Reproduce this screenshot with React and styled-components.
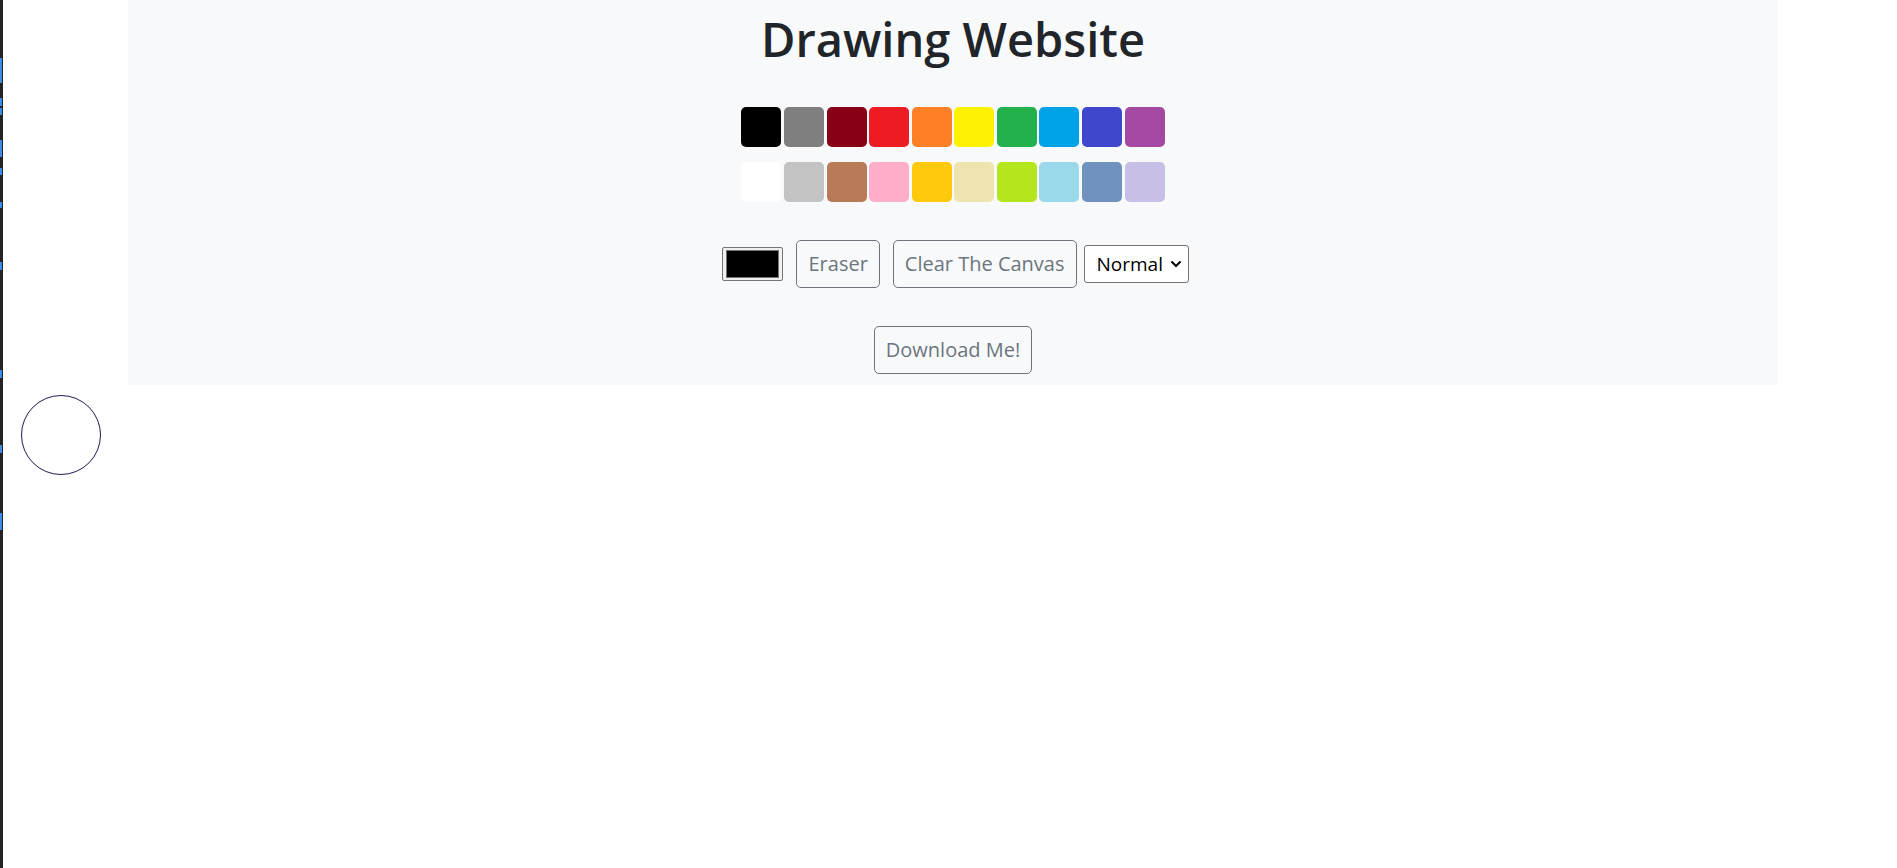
import React from "react";
import styled, { createGlobalStyle } from "styled-components";

const topColors = [
  "#000000",
  "#7f7f7f",
  "#880015",
  "#ed1c24",
  "#ff7f27",
  "#fff200",
  "#22b14c",
  "#00a2e8",
  "#3f48cc",
  "#a349a4",
];

const bottomColors = [
  "#ffffff",
  "#c3c3c3",
  "#b97a57",
  "#ffaec9",
  "#ffc90e",
  "#efe4b0",
  "#b5e61d",
  "#99d9ea",
  "#7092be",
  "#c8bfe7",
];

// blue marks on the dark strip at the far left (y, height)
const ticks = [
  [58, 25],
  [98, 8],
  [108, 7],
  [140, 17],
  [168, 7],
  [202, 6],
  [262, 8],
  [370, 8],
  [445, 8],
  [513, 17],
];

function App() {
  return (
    <>
      <GlobalStyle />
      <Page>
        <EdgeStrip width="3" height="868" viewBox="0 0 3 868">
          <rect x="0" y="0" width="3" height="868" fill="#232323" />
          {ticks.map(([y, h]) => (
            <rect key={y} x="0" y={y} width="2" height={h} fill="#3b8beb" />
          ))}
        </EdgeStrip>
        <Main>
          <Container>
            <Title>Drawing Website</Title>
            <Palette>
              <SwatchRow>
                {topColors.map((c) => (
                  <Swatch key={c} color={c} />
                ))}
              </SwatchRow>
              <SwatchRow>
                {bottomColors.map((c) => (
                  <Swatch key={c} color={c} />
                ))}
              </SwatchRow>
            </Palette>
            <Toolbar>
              <ColorInput type="color" defaultValue="#000000" />
              <OutlineButton>Eraser</OutlineButton>
              <OutlineButton>Clear The Canvas</OutlineButton>
              <SelectWrap>
                <Select defaultValue="normal">
                  <option value="normal">Normal</option>
                  <option value="thick">Thick</option>
                </Select>
                <Chevron viewBox="0 0 12 8" width="12" height="8">
                  <path
                    d="M1.5 1.5 L6 6 L10.5 1.5"
                    fill="none"
                    stroke="#000"
                    strokeWidth="2"
                  />
                </Chevron>
              </SelectWrap>
            </Toolbar>
            <DownloadRow>
              <OutlineButton>Download Me!</OutlineButton>
            </DownloadRow>
          </Container>
        </Main>
        <BrushCursor />
      </Page>
    </>
  );
}

export default App;

const GlobalStyle = createGlobalStyle`
  html, body {
    margin: 0;
    padding: 0;
    background: #ffffff;
  }
  body {
    font-family: "Open Sans", "Noto Sans", "Liberation Sans", sans-serif;
    color: #212529;
  }
`;

const Page = styled.div`
  position: relative;
  display: flex;
  min-height: 868px;
  overflow: hidden;
`;

const EdgeStrip = styled.svg`
  display: block;
  flex: 0 0 3px;
`;

const Main = styled.div`
  flex: 1;
  padding-left: 6px;
`;

const Container = styled.div`
  width: 1650px;
  margin: 0 auto;
  background: #f8f9fa;
  display: flex;
  flex-direction: column;
  align-items: center;
  padding-bottom: 11px;
`;

const Title = styled.h1`
  margin: 0;
  padding-top: 11px;
  font-size: 47px;
  font-weight: 600;
  line-height: 1.2;
  color: #212529;
`;

const Palette = styled.div`
  display: flex;
  flex-direction: column;
  gap: 15px;
  margin-top: 40px;
`;

const SwatchRow = styled.div`
  display: flex;
  gap: 2.6px;
`;

const Swatch = styled.div`
  width: 40px;
  height: 40px;
  border-radius: 5px;
  background: ${(p) => p.color};
`;

const Toolbar = styled.div`
  display: flex;
  align-items: center;
  margin-top: 38px;
  margin-left: 5px;
`;

const ColorInput = styled.input`
  width: 61px;
  height: 34px;
  box-sizing: border-box;
  padding: 2px 3px;
  margin: 0 13px 0 0;
  border: 1px solid #767676;
  border-radius: 2px;
  background: #efefef;
  cursor: pointer;
  &::-webkit-color-swatch-wrapper {
    padding: 0;
  }
  &::-webkit-color-swatch {
    border: 1px solid #777;
    border-radius: 0;
  }
`;

const OutlineButton = styled.button`
  font-family: "Open Sans", "Noto Sans", "Liberation Sans", sans-serif;
  font-size: 20px;
  line-height: 30px;
  padding: 8px 11px;
  margin-right: 13px;
  border: 1px solid #6c757d;
  border-radius: 5px;
  color: #6c757d;
  background: transparent;
  cursor: pointer;
  &:last-child {
    margin-right: 0;
  }
`;

const SelectWrap = styled.div`
  position: relative;
  margin-left: -6px;
`;

const Select = styled.select`
  appearance: none;
  width: 105px;
  height: 38px;
  box-sizing: border-box;
  padding: 0 24px 0 12px;
  font-family: "Open Sans", "Noto Sans", "Liberation Sans", sans-serif;
  font-size: 19px;
  color: #000;
  background: #ffffff;
  border: 1px solid #767676;
  border-radius: 3px;
`;

const Chevron = styled.svg`
  position: absolute;
  right: 7px;
  top: 15px;
  pointer-events: none;
`;

const DownloadRow = styled.div`
  display: flex;
  justify-content: center;
  margin-top: 38px;
`;

const BrushCursor = styled.div`
  position: absolute;
  left: 21px;
  top: 395px;
  width: 80px;
  height: 80px;
  box-sizing: border-box;
  border: 1.5px solid #1c1c58;
  border-radius: 50%;
  pointer-events: none;
`;
